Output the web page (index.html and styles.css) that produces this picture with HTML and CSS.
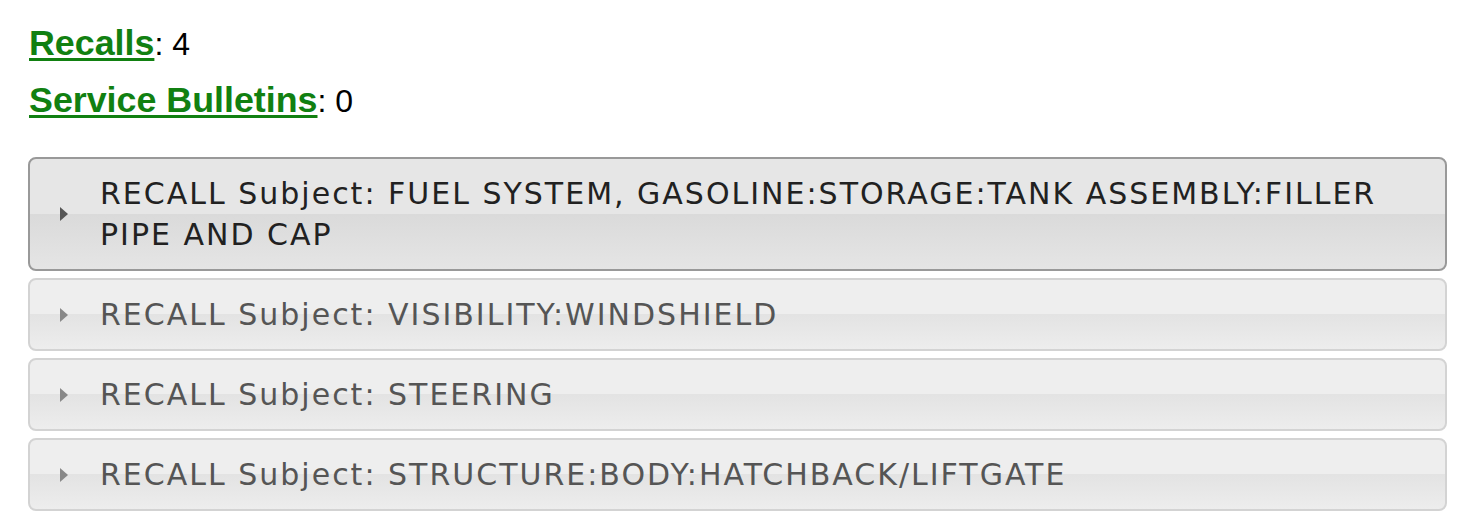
FILE: index.html
```html
<!DOCTYPE html>
<html lang="en">
<head>
    <meta charset="UTF-8">
    <meta name="viewport" content="width=device-width, initial-scale=1.0">
    <title>Vehicle Recalls</title>
    <link rel="stylesheet" href="styles.css">
</head>
<body>
    <div class="page">
        <div class="counts">
            <div class="count-line"><a href="#" class="count-link">Recalls</a>: 4</div>
            <div class="count-line"><a href="#" class="count-link">Service Bulletins</a>: 0</div>
        </div>

        <div class="accordion">
            <div class="acc-header hover">
                <svg class="acc-icon" width="8" height="14" viewBox="0 0 8 14"><polygon points="0,0 8,7 0,14"/></svg>
                <span class="acc-title">RECALL Subject: FUEL SYSTEM, GASOLINE:STORAGE:TANK ASSEMBLY:FILLER PIPE AND CAP</span>
            </div>
            <div class="acc-header">
                <svg class="acc-icon" width="8" height="14" viewBox="0 0 8 14"><polygon points="0,0 8,7 0,14"/></svg>
                <span class="acc-title">RECALL Subject: VISIBILITY:WINDSHIELD</span>
            </div>
            <div class="acc-header">
                <svg class="acc-icon" width="8" height="14" viewBox="0 0 8 14"><polygon points="0,0 8,7 0,14"/></svg>
                <span class="acc-title">RECALL Subject: STEERING</span>
            </div>
            <div class="acc-header">
                <svg class="acc-icon" width="8" height="14" viewBox="0 0 8 14"><polygon points="0,0 8,7 0,14"/></svg>
                <span class="acc-title">RECALL Subject: STRUCTURE:BODY:HATCHBACK/LIFTGATE</span>
            </div>
        </div>
    </div>
</body>
</html>
```

FILE: styles.css
```css
body {
    margin: 0;
    background: #ffffff;
    font-family: "Liberation Sans", Arial, sans-serif;
}

.page {
    padding: 16px 21px 0 28px;
}

.counts {
    font-size: 32px;
    color: #000;
}

.count-line {
    line-height: 57px;
    padding-left: 1px;
}

.count-link {
    font-size: 35.8px;
    line-height: 1;
    font-weight: bold;
    color: #118011;
    text-decoration-thickness: 3px;
    text-underline-offset: 3px;
}

.accordion {
    margin-top: 27px;
}

.acc-header {
    display: flex;
    align-items: center;
    margin-bottom: 7px;
    padding: 14px 15px 14px 30px;
    border: 2px solid #d3d3d3;
    border-radius: 8px;
    background: linear-gradient(to bottom, #eeeeee 0%, #eeeeee 50%, #e3e3e3 50%, #ededed 100%);
    color: #555555;
    font-family: "DejaVu Sans", Verdana, sans-serif;
    font-size: 30px;
    line-height: 41px;
    letter-spacing: 2px;
}

.acc-header.hover {
    border-color: #999999;
    background: linear-gradient(to bottom, #e6e6e6 0%, #e6e6e6 50%, #dadada 50%, #e5e5e5 100%);
    color: #212121;
}

.acc-icon {
    flex: none;
    margin-right: 32px;
    fill: #888888;
}

.acc-header.hover .acc-icon {
    fill: #555555;
}
```
